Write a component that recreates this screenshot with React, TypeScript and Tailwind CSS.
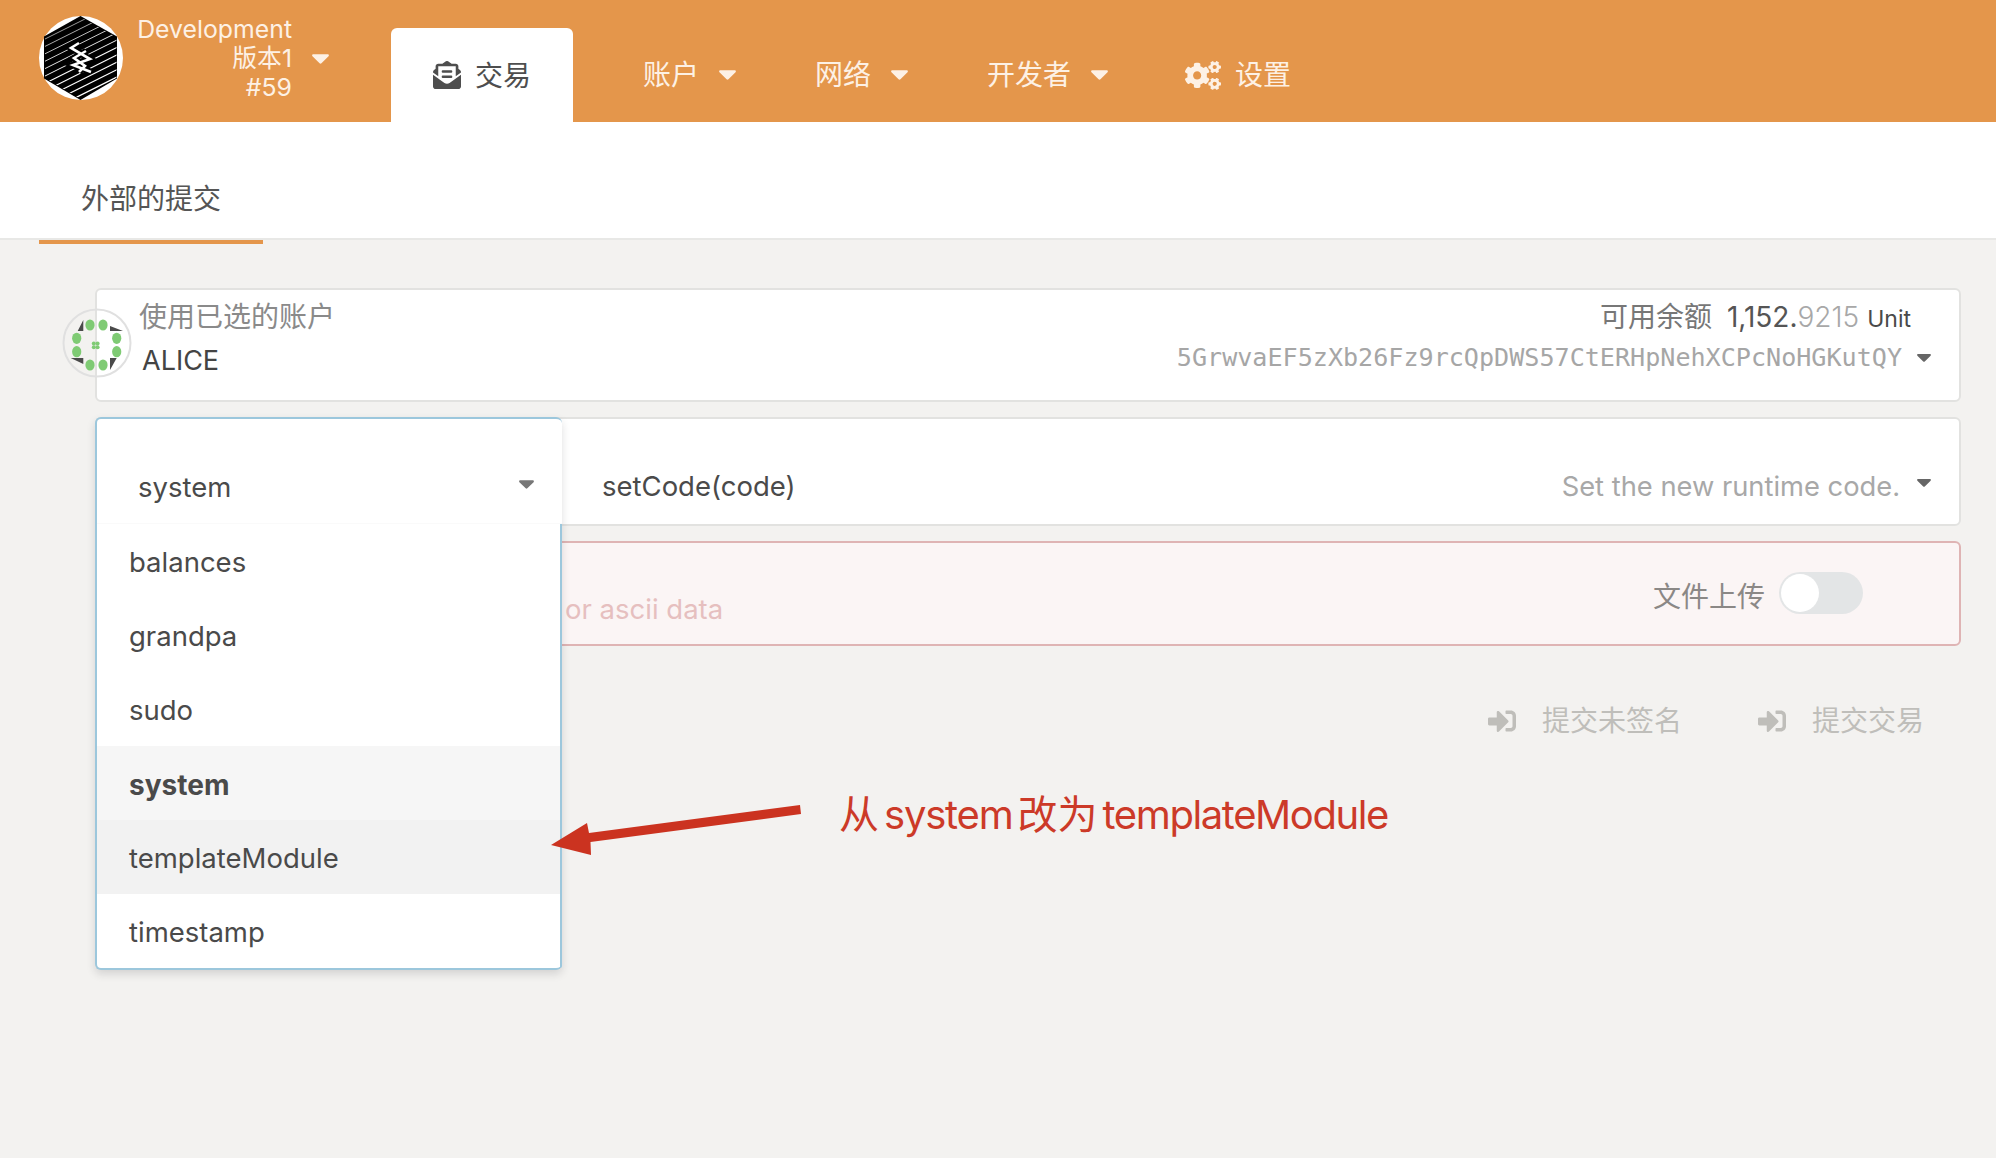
import { FaCogs, FaEnvelopeOpenText, FaSignInAlt } from 'react-icons/fa';

const FONT = "font-['Inter','Noto_Sans_CJK_SC',sans-serif]";
const HELIX = 'M40 27 L32 32 L51 43 L34 49 L52 56 M47 35 L35 42 L46 50 L40 56';

// little rounded triangle used by every dropdown
function Caret({ className }: { className: string }) {
  return (
    <svg viewBox="0 0 18 10" className={className} fill="currentColor">
      <path d="M1.5 0h15c1.2 0 1.8 1.3 1 2.2L10 9.5c-.6.6-1.4.6-2 0L.5 2.2C-.3 1.3.3 0 1.5 0z" />
    </svg>
  );
}

function Logo() {
  const lines = [];
  for (let i = 0; i < 17; i++) {
    const y = 26 + i * 7.4;
    lines.push(<line key={i} x1="0" y1={y} x2="84" y2={y - 42} stroke="white" strokeWidth={0.6 + i * 0.07} />);
  }
  return (
    <svg viewBox="0 0 84 84" className="w-[84px] h-[84px] shrink-0">
      <defs>
        <clipPath id="hex">
          <polygon points="41.5,1 77.5,21 77.5,62 41.5,83 6,62 6,21" />
        </clipPath>
      </defs>
      <circle cx="42" cy="42" r="42" fill="white" />
      <polygon points="41.5,0 78,20.5 78,62.5 41.5,84 5,62.5 5,20.5" fill="black" />
      <g clipPath="url(#hex)">{lines}</g>
      <path d={HELIX} fill="none" stroke="black" strokeWidth="6.5" />
      <path d={HELIX} fill="none" stroke="white" strokeWidth="2.6" />
    </svg>
  );
}

function Identicon() {
  const dots = [
    [30, 19],
    [43, 19],
    [16.7, 32.3],
    [56.7, 32.3],
    [16.7, 45.7],
    [56.7, 45.7],
    [30, 59],
    [43, 59],
  ];
  return (
    <svg viewBox="0 0 74 74" className="w-[74px] h-[74px]">
      <circle cx="37" cy="37" r="33.5" fill="none" stroke="#e0e0e0" strokeWidth="2" />
      <path
        d="M23.3 14v11h-5.6zM50 20l13 5H50zM10.7 52h12.6v6zM56.7 52H50v12z"
        fill="#4a4a4a"
      />
      {dots.map(([cx, cy]) => (
        <ellipse key={`${cx}-${cy}`} cx={cx} cy={cy} rx="4.6" ry="5.6" fill="#7fcb74" />
      ))}
      <g fill="#7fcb74">
        <circle cx="33.8" cy="37.4" r="2" />
        <circle cx="37.6" cy="37.4" r="2" />
        <circle cx="33.8" cy="41.2" r="2" />
        <circle cx="37.6" cy="41.2" r="2" />
      </g>
    </svg>
  );
}

function NavItem({ label, className }: { label: string; className: string }) {
  return (
    <div className={`flex items-center h-full text-[28px] text-[#fdf1e5] ${className}`}>
      <span>{label}</span>
      <Caret className="w-[17px] h-[10px] ml-[20px] text-[#fdf1e5]" />
    </div>
  );
}

function Header() {
  return (
    <header className="flex h-[122px] bg-[#e4964b]">
      <div className="ml-[39px] mt-[16px]">
        <Logo />
      </div>
      <div className="ml-[14px] mt-[15px] w-[155px] text-right text-[24.8px] leading-[29px] text-[#fdf1e5] whitespace-nowrap">
        <div>Development</div>
        <div>版本1</div>
        <div>#59</div>
      </div>
      <Caret className="w-[17px] h-[10px] ml-[20px] mt-[54px] text-[#fdf1e5]" />
      <div className="ml-[62px] mt-[28px] flex h-[94px]">
        <div className="flex items-center w-[182px] pl-[42px] bg-white rounded-t-md text-[28px] text-[#4e4e4e]">
          <FaEnvelopeOpenText className="w-[28px] h-[28px]" />
          <span className="ml-[14px] mt-[2px]">交易</span>
        </div>
        <NavItem label="账户" className="ml-[70px]" />
        <NavItem label="网络" className="ml-[79px]" />
        <NavItem label="开发者" className="ml-[79px]" />
        <div className="ml-[77px] flex items-center h-full text-[28px] text-[#fdf1e5]">
          <FaCogs className="w-[36px] h-[29px]" />
          <span className="ml-[14px]">设置</span>
        </div>
      </div>
    </header>
  );
}

function ModuleDropdown() {
  const rows = ['balances', 'grandpa', 'sudo', 'system', 'templateModule', 'timestamp'];
  return (
    <div className="absolute left-0 top-0 z-10 w-[467px] h-[553px] bg-white border-2 border-[#9cc7dc] border-r-0 rounded-md shadow-[0_4px_8px_rgba(34,36,38,0.15)] text-[27.5px] text-[#4a4a4a]">
      <div className="relative h-[105px] border-b border-[#fafafa]">
        <span className="absolute left-[41px] top-[50px] leading-9">system</span>
        <Caret className="absolute left-[422px] top-[61px] w-[15px] h-[9px] text-[#777777]" />
      </div>
      {rows.map((row) => (
        <div
          key={row}
          className={`flex items-center h-[74px] pl-[32px] pt-[4px] ${
            row === 'system'
              ? 'bg-[#f6f6f6] font-bold text-[28px]'
              : row === 'templateModule'
                ? 'bg-[#f2f2f2]'
                : ''
          }`}
        >
          {row}
        </div>
      ))}
      <div className="absolute top-[105px] right-0 bottom-0 w-[2px] bg-[#9cc7dc] rounded-br-md" />
    </div>
  );
}

function Annotation() {
  return (
    <>
      <svg viewBox="0 0 260 60" className="absolute left-[545px] top-[800px] z-20 w-[260px] h-[60px]">
        <path d="M6 45 L42 23 L44 33 L255 5 L256 14 L45.5 42 L46 55z" fill="#cb3320" />
      </svg>
      <div className="absolute left-[839px] top-[790px] z-20 flex gap-[5px] text-[40px] leading-[50px] text-[#cc3a28] whitespace-nowrap">
        <span>从</span>
        <span className="tracking-[-1.2px]">system</span>
        <span>改为</span>
        <span className="tracking-[-1.4px]">templateModule</span>
      </div>
    </>
  );
}

export default function App() {
  return (
    <div className={`relative min-h-screen bg-[#f3f2f0] ${FONT}`}>
      <Header />
      <div className="h-[118px] bg-white border-b-2 border-[#e8e8e6] relative">
        <div className="ml-[39px] w-[224px] h-full flex items-center justify-center pt-[38px] text-[28px] text-[#555555]">
          外部的提交
        </div>
        <div className="absolute left-[39px] top-[118px] w-[224px] h-[4px] bg-[#e4964b]" />
      </div>

      <main className="ml-[95px] mr-[35px] pt-[48px] relative">
        <div className="relative h-[114px] bg-white border-2 border-[#e2e2e0] rounded-md flex justify-between">
          <div className="absolute left-[-37px] top-[16px]">
            <Identicon />
          </div>
          <div className="pt-[9px] pl-[42px]">
            <div className="text-[28px] leading-9 text-[#8a8a8a]">使用已选的账户</div>
            <div className="mt-[8px] ml-[3px] text-[27px] leading-9 text-[#444444]">ALICE</div>
          </div>
          <div className="pt-[9px] pr-[28px] flex flex-col items-end">
            <div className="flex items-baseline pr-[20px] text-[#555555] leading-9">
              <span className="text-[28px] text-[#777777]">可用余额</span>
              <span className="ml-[15px] text-[28px]">1,152.</span>
              <span className="text-[28px] font-light text-[#a8a8a8]">9215</span>
              <span className="ml-[8px] text-[23px] text-[#4a4a4a]">Unit</span>
            </div>
            <div className="mt-[3px] flex items-center">
              <span className="font-['DejaVu_Sans_Mono',monospace] text-[25.1px] leading-9 text-[#a6a6a6]">
                5GrwvaEF5zXb26Fz9rcQpDWS57CtERHpNehXCPcNoHGKutQY
              </span>
              <Caret className="ml-[15px] w-[14px] h-[8px] text-[#666666]" />
            </div>
          </div>
        </div>

        <div className="relative mt-[15px]">
          <ModuleDropdown />
          <div className="h-[109px] bg-white border-2 border-[#e2e2e0] rounded-md flex items-center justify-between pt-[31px] pr-[28px]">
            <span className="ml-[505px] text-[27.5px] text-[#4a4a4a]">setCode(code)</span>
            <div className="flex items-center">
              <span className="text-[27.3px] text-[#a8a8a8]">Set the new runtime code.</span>
              <Caret className="ml-[17px] mb-[8px] w-[14px] h-[8px] text-[#666666]" />
            </div>
          </div>

          <div className="mt-[15px] h-[105px] bg-[#fbf5f5] border-2 border-[#dfb4b4] rounded-md flex items-center justify-between">
            <span className="ml-[468px] mt-[32px] text-[27.5px] text-[#e6bfbf]">or ascii data</span>
            <div className="flex items-center mr-[96px] mt-[-2px]">
              <span className="mt-[8px] text-[28px] text-[#8b8886]">文件上传</span>
              <div className="ml-[14px] w-[84px] h-[42px] rounded-full bg-[#e3e5e6] p-[2px]">
                <div className="w-[38px] h-[38px] rounded-full bg-white" />
              </div>
            </div>
          </div>

          <div className="mt-[57px] flex justify-end pr-[37px] text-[28px] leading-9 text-[#bfbeba]">
            <div className="flex items-center">
              <FaSignInAlt className="w-[28px] h-[28px]" />
              <span className="ml-[26px]">提交未签名</span>
            </div>
            <div className="flex items-center ml-[76px]">
              <FaSignInAlt className="w-[28px] h-[28px]" />
              <span className="ml-[26px]">提交交易</span>
            </div>
          </div>
        </div>
      </main>

      <Annotation />
    </div>
  );
}
